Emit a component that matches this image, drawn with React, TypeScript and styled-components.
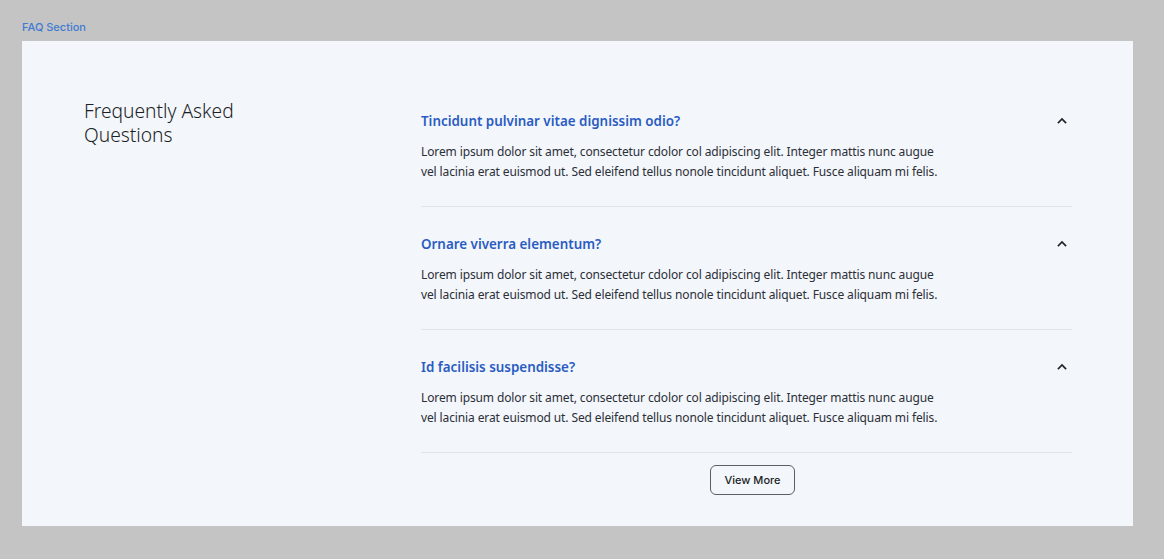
import React from "react";
import styled, { createGlobalStyle } from "styled-components";

const GlobalStyle = createGlobalStyle`
  html, body { margin: 0; padding: 0; background: #c4c4c4; }
  body { font-family: "Noto Sans", sans-serif; }
  * { box-sizing: border-box; }
`;

const Page = styled.div`
  padding: 20px 31px 33px 22px;
  display: flex;
  flex-direction: column;
  gap: 7px;
  min-height: 559px;
`;

const Label = styled.div`
  font-family: Inter, sans-serif;
  font-size: 11px;
  line-height: 14px;
  font-weight: 500;
  color: #3f7bd2;
`;

const Panel = styled.section`
  width: 1111px;
  height: 485px;
  background: #f3f6fb;
  display: grid;
  grid-template-columns: 337px 651px;
  padding: 0 61px 0 62px;
`;

const Heading = styled.h2`
  margin: 58px 0 0;
  font-size: 19.2px;
  line-height: 24px;
  font-weight: 300;
  color: #1c1f26;
`;

const List = styled.div`
  padding-top: 70px;
  display: flex;
  flex-direction: column;
`;

const Item = styled.div<{ $first?: boolean }>`
  padding: ${(p) => (p.$first ? "0" : "27px")} 0 24px;
  border-bottom: 1px solid #e1e5eb;
  display: flex;
  flex-direction: column;
  gap: 11px;
`;

const QuestionRow = styled.div`
  display: flex;
  align-items: center;
  justify-content: space-between;
`;

const Question = styled.h3`
  margin: 0;
  font-size: 13.4px;
  line-height: 20px;
  font-weight: 600;
  color: #2a5cc2;
`;

const Toggle = styled.span`
  width: 16px;
  height: 16px;
  margin-right: 2px;
  display: flex;
  color: #1e2229;
`;

const Answer = styled.p`
  margin: 0;
  max-width: 530px;
  font-size: 12px;
  line-height: 20px;
  letter-spacing: -0.12px;
  color: #2b2f36;
`;

const Footer = styled.div`
  display: flex;
  justify-content: center;
  padding: 12px 0 0 12px;
`;

const Button = styled.button`
  width: 85px;
  height: 30px;
  border: 1px solid #5a5e66;
  border-radius: 6px;
  background: transparent;
  font-family: Inter, sans-serif;
  font-size: 11px;
  font-weight: 500;
  color: #1c1f26;
  cursor: pointer;
`;

const Chevron = () => (
  <svg width="16" height="16" viewBox="0 0 16 16" fill="none">
    <path d="M4.5 9.5 L8 6 L11.5 9.5" stroke="currentColor" strokeWidth="1.7" strokeLinecap="square" />
  </svg>
);

const answer =
  "Lorem ipsum dolor sit amet, consectetur cdolor col adipiscing elit. Integer mattis nunc augue vel lacinia erat euismod ut. Sed eleifend tellus nonole tincidunt aliquet. Fusce aliquam mi felis.";

const faqs = [
  "Tincidunt pulvinar vitae dignissim odio?",
  "Ornare viverra elementum?",
  "Id facilisis suspendisse?",
];

export default function App() {
  return (
    <>
      <GlobalStyle />
      <Page>
        <Label>FAQ Section</Label>
        <Panel>
          <div>
            <Heading>
              Frequently Asked
              <br />
              Questions
            </Heading>
          </div>
          <List>
            {faqs.map((q, i) => (
              <Item key={q} $first={i === 0}>
                <QuestionRow>
                  <Question>{q}</Question>
                  <Toggle>
                    <Chevron />
                  </Toggle>
                </QuestionRow>
                <Answer>{answer}</Answer>
              </Item>
            ))}
            <Footer>
              <Button>View More</Button>
            </Footer>
          </List>
        </Panel>
      </Page>
    </>
  );
}
